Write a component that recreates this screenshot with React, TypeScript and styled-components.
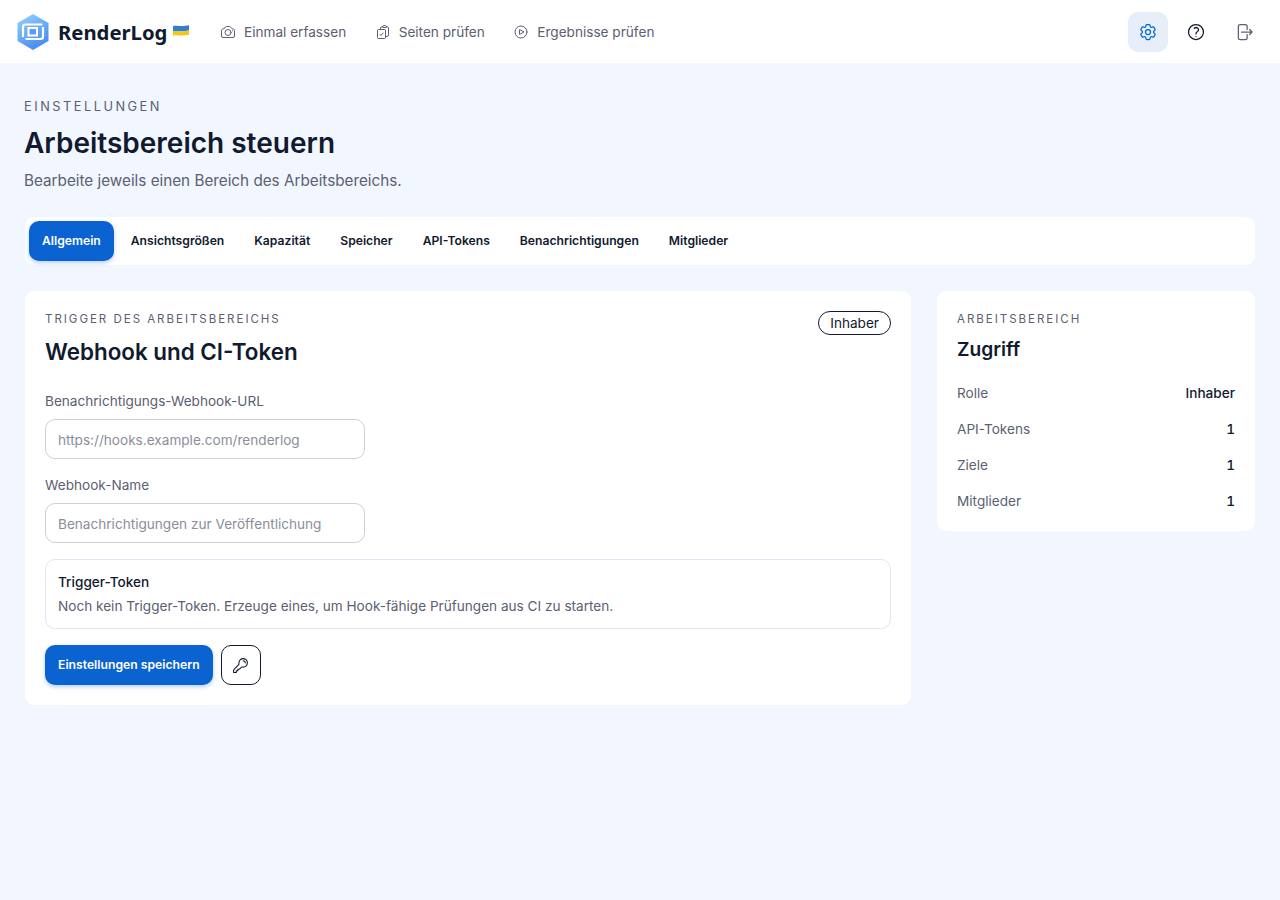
import React from "react"
import styled, { createGlobalStyle } from "styled-components"
import {
  HiOutlineArrowRightOnRectangle,
  HiOutlineCamera,
  HiOutlineClipboardDocumentCheck,
  HiOutlineCog6Tooth,
  HiOutlineKey,
  HiOutlinePlayCircle,
  HiOutlineQuestionMarkCircle,
} from "react-icons/hi2"

const GlobalStyle = createGlobalStyle`
  * {
    box-sizing: border-box;
  }
  body {
    margin: 0;
    background: #f2f6ff;
    font-family: Inter, "Liberation Sans", sans-serif;
    color: #111a2e;
  }
`

const Page = styled.div`
  min-height: 900px;
  background: #f2f6ff;
`

const Header = styled.header`
  display: flex;
  align-items: center;
  justify-content: space-between;
  height: 63px;
  padding: 0 16px;
  background: #fff;
`

const HeaderLeft = styled.div`
  display: flex;
  align-items: center;
`

const Brand = styled.div`
  display: flex;
  align-items: center;
  width: 204px;
`

const BrandName = styled.span`
  margin-left: 8px;
  font-family: "Noto Sans", sans-serif;
  font-size: 20.3px;
  font-weight: 700;
  color: #111a2e;
`

const Flag = styled.svg`
  margin-left: 6px;
  margin-top: -3px;
`

const NavLink = styled.a`
  display: flex;
  align-items: center;
  gap: 8px;
  margin-right: 28.5px;
  font-size: 13.6px;
  color: #5b6072;
`

const HeaderActions = styled.div`
  display: flex;
  align-items: center;
  gap: 8px;
`

const IconButton = styled.button<{ $active?: boolean; $muted?: boolean }>`
  display: flex;
  align-items: center;
  justify-content: center;
  width: 40px;
  height: 40px;
  padding: 0;
  border: 0;
  border-radius: 10px;
  background: ${(p) => (p.$active ? "#e6eefa" : "transparent")};
  color: ${(p) => (p.$active ? "#0b63d1" : p.$muted ? "#5b6072" : "#111a2e")};
`

const Main = styled.main`
  padding: 35px 24px 0;
`

const Eyebrow = styled.div`
  font-size: 12.8px;
  line-height: 18px;
  letter-spacing: 2.5px;
  color: #5b6072;
`

const PageTitle = styled.h1`
  margin: 9px 0 0;
  font-size: 28px;
  line-height: 36px;
  font-weight: 600;
  color: #111a2e;
`

const Subtitle = styled.p`
  margin: 8px 0 0;
  font-size: 15.25px;
  line-height: 24px;
  color: #5b6072;
`

const Tabs = styled.nav`
  display: flex;
  gap: 4px;
  margin-top: 23px;
  padding: 4px;
  border: 1px solid #f2f6ff;
  border-radius: 10px;
  background: #fff;
`

const Tab = styled.a<{ $active?: boolean }>`
  display: flex;
  align-items: center;
  height: 40px;
  padding: 0 13px 1px;
  border-radius: 10px;
  font-size: 12.16px;
  font-weight: 600;
  background: ${(p) => (p.$active ? "#0b63d1" : "transparent")};
  color: ${(p) => (p.$active ? "#fff" : "#111a2e")};
  box-shadow: ${(p) => (p.$active ? "0 2px 4px rgba(11, 99, 209, 0.3)" : "none")};
`

const Columns = styled.div`
  display: grid;
  grid-template-columns: 888px 320px;
  gap: 24px;
  align-items: start;
  margin-top: 24px;
`

const Card = styled.section`
  position: relative;
  padding: 21px 20px 20px;
  border: 1px solid #f2f6ff;
  border-radius: 10px;
  background: #fff;
`

const CardEyebrow = styled.div`
  font-size: 11.5px;
  line-height: 14px;
  letter-spacing: 1.98px;
  color: #5b6072;
`

const CardTitle = styled.h2`
  margin: 11px 0 0;
  font-size: 22.4px;
  line-height: 30px;
  font-weight: 600;
  color: #111a2e;
`

const Badge = styled.span`
  position: absolute;
  top: 20px;
  right: 20px;
  padding: 0 11px;
  height: 24px;
  border: 1px solid #111a2e;
  border-radius: 12px;
  font-size: 13.6px;
  line-height: 23px;
  color: #111a2e;
`

const Field = styled.label`
  display: block;
  width: 320px;
  margin-top: 16px;
`

const FirstField = styled(Field)`
  margin-top: 24px;
`

const FieldLabel = styled.span`
  display: block;
  font-size: 13.6px;
  line-height: 20px;
  color: #5b6072;
`

const Input = styled.input`
  display: block;
  width: 100%;
  height: 40px;
  margin-top: 8px;
  padding: 2px 12px 0;
  border: 1px solid #ccd0d7;
  border-radius: 10px;
  background: #fff;
  font-family: inherit;
  font-size: 13.6px;
  color: #111a2e;

  &::placeholder {
    color: #8a8e9b;
    opacity: 1;
  }
`

const TokenBox = styled.div`
  margin-top: 16px;
  padding: 12px;
  border: 1px solid #dde7f6;
  border-radius: 10px;
`

const TokenTitle = styled.div`
  font-size: 13.6px;
  line-height: 20px;
  font-weight: 500;
  color: #111a2e;
`

const TokenText = styled.div`
  margin-top: 4px;
  font-size: 13.6px;
  line-height: 20px;
  color: #5b6072;
`

const Actions = styled.div`
  display: flex;
  gap: 8px;
  margin-top: 16px;
`

const PrimaryButton = styled.button`
  height: 40px;
  padding: 0 13px 2px;
  border: 0;
  border-radius: 10px;
  background: #0b63d1;
  color: #fff;
  font-family: inherit;
  font-size: 12.2px;
  font-weight: 600;
  box-shadow: 0 2px 4px rgba(11, 99, 209, 0.3);
`

const OutlineButton = styled.button`
  display: flex;
  align-items: center;
  justify-content: center;
  width: 40px;
  height: 40px;
  padding: 0;
  border: 1px solid #111a2e;
  border-radius: 10px;
  background: #fff;
  color: #111a2e;
`

const SideTitle = styled.h3`
  margin: 9px 0 0;
  font-size: 19.2px;
  line-height: 28px;
  font-weight: 600;
  color: #111a2e;
`

const StatList = styled.dl`
  display: grid;
  gap: 16px;
  margin: 20px 0 0;
`

const StatRow = styled.div`
  display: flex;
  justify-content: space-between;
  font-size: 13.6px;
  line-height: 20px;
`

const StatName = styled.dt`
  color: #5b6072;
`

const StatValue = styled.dd`
  margin: 0;
  font-weight: 500;
  font-variant-numeric: tabular-nums;
  color: #111a2e;
`

const Logo = () => (
  <svg width="34" height="36" viewBox="0 0 33 36">
    <defs>
      <linearGradient id="hex" x1="0.2" y1="0" x2="0.7" y2="1">
        <stop offset="0" stopColor="#93cdfb" />
        <stop offset="1" stopColor="#4287f1" />
      </linearGradient>
    </defs>
    <path d="M16.500 0 32 9v18l-15.500 9L1 27V9z" fill="url(#hex)" />
    <path d="M6.500 23V13a2.500 2.500 0 0 1 2.500-2.500h17" fill="none" stroke="#fff" strokeWidth="2.200" />
    <path d="M26.500 13v9.500a2.500 2.500 0 0 1-2.500 2.500H9" fill="none" stroke="#fff" strokeWidth="2.200" />
    <rect x="12" y="14" width="8.500" height="7.500" fill="#5a9bf4" stroke="#fff" strokeWidth="2" />
  </svg>
)

const navItems = [
  { label: "Einmal erfassen", icon: <HiOutlineCamera size={16} /> },
  { label: "Seiten prüfen", icon: <HiOutlineClipboardDocumentCheck size={16} /> },
  { label: "Ergebnisse prüfen", icon: <HiOutlinePlayCircle size={16} /> },
]

const tabs = ["Allgemein", "Ansichtsgrößen", "Kapazität", "Speicher", "API-Tokens", "Benachrichtigungen", "Mitglieder"]

const stats = [
  ["Rolle", "Inhaber"],
  ["API-Tokens", "1"],
  ["Ziele", "1"],
  ["Mitglieder", "1"],
]

const App: React.FC = () => {
  return (
    <Page>
      <GlobalStyle />
      <Header>
        <HeaderLeft>
          <Brand>
            <Logo />
            <BrandName>RenderLog</BrandName>
            <Flag width="16" height="13" viewBox="0 0 17 13">
              <path d="M0 2c4-1.500 8 1 17-1v5.500c-9 2-13-.5-17 1z" fill="#2f7fd8" />
              <path d="M0 7.500c4-1.500 8 1 17-1V11c-9 2-13-.5-17 1z" fill="#f5c518" />
            </Flag>
          </Brand>
          {navItems.map((item) => (
            <NavLink key={item.label}>
              {item.icon}
              {item.label}
            </NavLink>
          ))}
        </HeaderLeft>
        <HeaderActions>
          <IconButton $active>
            <HiOutlineCog6Tooth size={20} />
          </IconButton>
          <IconButton>
            <HiOutlineQuestionMarkCircle size={20} />
          </IconButton>
          <IconButton $muted>
            <HiOutlineArrowRightOnRectangle size={20} />
          </IconButton>
        </HeaderActions>
      </Header>
      <Main>
        <Eyebrow>EINSTELLUNGEN</Eyebrow>
        <PageTitle>Arbeitsbereich steuern</PageTitle>
        <Subtitle>Bearbeite jeweils einen Bereich des Arbeitsbereichs.</Subtitle>
        <Tabs>
          {tabs.map((tab, i) => (
            <Tab key={tab} $active={i === 0}>
              {tab}
            </Tab>
          ))}
        </Tabs>
        <Columns>
          <Card>
            <CardEyebrow>TRIGGER DES ARBEITSBEREICHS</CardEyebrow>
            <CardTitle>Webhook und CI-Token</CardTitle>
            <Badge>Inhaber</Badge>
            <FirstField>
              <FieldLabel>Benachrichtigungs-Webhook-URL</FieldLabel>
              <Input placeholder="https://hooks.example.com/renderlog" />
            </FirstField>
            <Field>
              <FieldLabel>Webhook-Name</FieldLabel>
              <Input placeholder="Benachrichtigungen zur Veröffentlichung" />
            </Field>
            <TokenBox>
              <TokenTitle>Trigger-Token</TokenTitle>
              <TokenText>Noch kein Trigger-Token. Erzeuge eines, um Hook-fähige Prüfungen aus CI zu starten.</TokenText>
            </TokenBox>
            <Actions>
              <PrimaryButton>Einstellungen speichern</PrimaryButton>
              <OutlineButton>
                <HiOutlineKey size={17} />
              </OutlineButton>
            </Actions>
          </Card>
          <Card>
            <CardEyebrow>ARBEITSBEREICH</CardEyebrow>
            <SideTitle>Zugriff</SideTitle>
            <StatList>
              {stats.map(([name, value]) => (
                <StatRow key={name}>
                  <StatName>{name}</StatName>
                  <StatValue>{value}</StatValue>
                </StatRow>
              ))}
            </StatList>
          </Card>
        </Columns>
      </Main>
    </Page>
  )
}

export default App
